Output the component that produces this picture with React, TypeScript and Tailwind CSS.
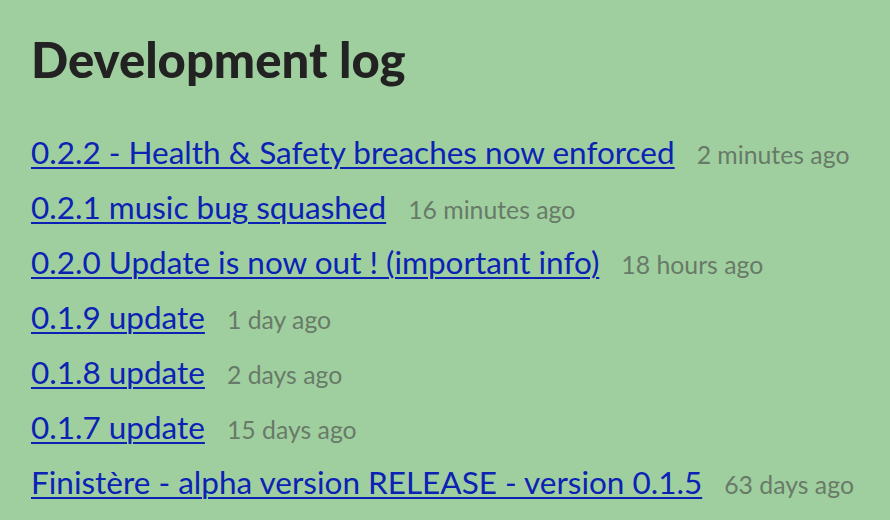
const entries = [
  { title: "0.2.2 - Health & Safety breaches now enforced", when: "2 minutes ago" },
  { title: "0.2.1 music bug squashed", when: "16 minutes ago" },
  { title: "0.2.0 Update is now out ! (important info)", when: "18 hours ago" },
  { title: "0.1.9 update", when: "1 day ago" },
  { title: "0.1.8 update", when: "2 days ago" },
  { title: "0.1.7 update", when: "15 days ago" },
  { title: "Finistère - alpha version RELEASE - version 0.1.5", when: "63 days ago" },
];

export default function App() {
  return (
    <div className="w-[890px] h-[520px] overflow-hidden bg-[#a0cf9f] px-[31px] pt-[30px] font-['Lato',sans-serif]">
      <h1 className="text-[49px] font-black leading-[1.2] text-[#222222] mb-[45px]">Development log</h1>
      <ul className="flex flex-col">
        {entries.map((e) => (
          <li key={e.title} className="flex items-baseline h-[55px]">
            <a href="#" className="text-[31.5px] leading-[1.2] text-[#0b22b5] underline underline-offset-[3px] decoration-[2px]">
              {e.title}
            </a>
            <span className="ml-[22px] text-[24.8px] text-[#687a68]">{e.when}</span>
          </li>
        ))}
      </ul>
    </div>
  );
}
